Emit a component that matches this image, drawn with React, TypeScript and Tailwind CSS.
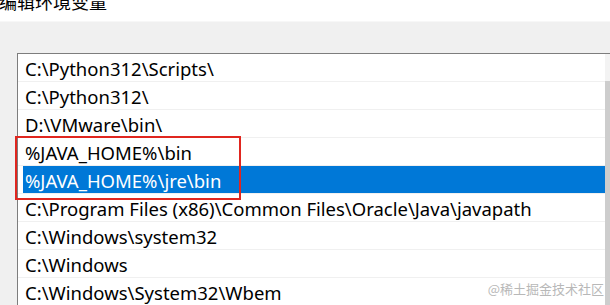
import React from "react";

const rows = [
  "C:\\Python312\\Scripts\\",
  "C:\\Python312\\",
  "D:\\VMware\\bin\\",
  "%JAVA_HOME%\\bin",
  "%JAVA_HOME%\\jre\\bin",
  "C:\\Program Files (x86)\\Common Files\\Oracle\\Java\\javapath",
  "C:\\Windows\\system32",
  "C:\\Windows",
  "C:\\Windows\\System32\\Wbem",
];

export default function App() {
  return (
    <div
      className="relative w-[610px] h-[305px] overflow-hidden bg-[#f0f0f0] flex flex-col"
      style={{ fontFamily: '"Noto Sans", "Noto Sans CJK SC", sans-serif' }}
    >
      <div className="h-[22px] shrink-0 bg-white overflow-hidden border-b border-[#f7f7f7]">
        <div
          className="mt-[-8px] ml-[-1px] text-[18px] leading-[18px] text-black"
          style={{ fontFamily: '"Noto Sans CJK SC", sans-serif' }}
        >
          编辑环境变量
        </div>
      </div>
      <div className="flex-1 pt-[31px] pl-[17px]">
        <div className="h-full border-t border-l border-[#7d7d7d] bg-white flex">
          <div className="flex-1 flex flex-col">
            {rows.map((r, i) => {
              const sel = i === 4;
              return (
                <div
                  key={i}
                  className="h-[28px] shrink-0 pl-[5px] border-b border-[#f0f0f0] flex"
                >
                  <div
                    className={
                      "flex-1 h-full flex items-center pl-[2px] pt-[2px] text-[18.5px] whitespace-nowrap " +
                      (sel ? "bg-[#0078d7] text-white" : "text-black")
                    }
                  >
                    {r}
                  </div>
                </div>
              );
            })}
          </div>
          <div className="w-[5px] flex flex-col">
            <div className="h-[27px] bg-[#f3f3f3]" />
            <div className="flex-1 bg-[#cdcdcd]" />
          </div>
        </div>
      </div>
      <div className="absolute left-[15px] top-[136px] w-[226px] h-[64px] border-2 border-[#e0261f]" />
      <div
        className="absolute right-[6px] top-[281px] text-[13px] leading-[16px] text-[#b8b8b8]"
        style={{ fontFamily: '"Noto Sans CJK SC", sans-serif' }}
      >
        @稀土掘金技术社区
      </div>
    </div>
  );
}
